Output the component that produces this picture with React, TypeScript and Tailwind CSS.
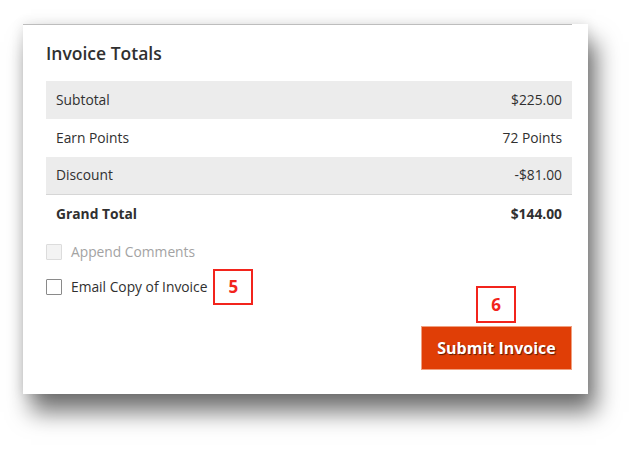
export default function App() {
  const rows = [
    { label: "Subtotal", value: "$225.00", gray: true },
    { label: "Earn Points", value: "72 Points", gray: false },
    { label: "Discount", value: "-$81.00", gray: true, border: true },
    { label: "Grand Total", value: "$144.00", gray: false, bold: true },
  ];

  return (
    <div className="w-[644px] h-[450px] bg-white overflow-hidden font-['Open_Sans',sans-serif] text-[#303030]">
      <div className="ml-[23px] mt-[24px] w-[565px] h-[370px] bg-white shadow-[8px_18px_22px_rgba(0,0,0,0.55),0_0_12px_rgba(0,0,0,0.12)] pl-[23px] pr-[16px] flex flex-col">
        {/* top rule stops short of the right edge */}
        <div className="-ml-[23px] h-px bg-[#bdbdbd]" />
        <h2 className="mt-[15px] h-[26px] leading-[26px] text-[17.5px] font-semibold text-[#303030]">
          Invoice Totals
        </h2>

        <div className="mt-[15px] flex flex-col">
          {rows.map((r) => (
            <div
              key={r.label}
              className={`h-[38px] px-[10px] flex items-center justify-between text-[13.8px] ${
                r.gray ? "bg-[#ececec]" : "bg-white"
              } ${r.border ? "border-b border-[#d6d6d6]" : ""} ${r.bold ? "font-bold" : ""}`}
            >
              <span>{r.label}</span>
              <span>{r.value}</span>
            </div>
          ))}
        </div>

        <div className="mt-[10px] flex items-center h-[18px]">
          <span className="w-[16px] h-[16px] border border-[#dcdcdc] bg-[#f3f3f3] rounded-[1px]" />
          <span className="ml-[9px] text-[13.8px] text-[#a3a3a3]">Append Comments</span>
        </div>

        <div className="mt-[8px] flex items-center h-[36px]">
          <span className="w-[16px] h-[16px] border border-[#8a8a8a] bg-white rounded-[1px]" />
          <span className="ml-[9px] text-[13.8px] text-[#303030]">Email Copy of Invoice</span>
          <span className="ml-[6px] w-[40px] h-[36px] border-2 border-[#f2241c] flex items-center justify-center text-[17px] font-bold text-[#f2241c]">
            5
          </span>
        </div>

        <div className="flex flex-col items-end">
          <div className="mr-[56px] -mt-[19px] w-[40px] h-[37px] border-2 border-[#f2241c] flex items-center justify-center text-[17px] font-bold text-[#f2241c]">
            6
          </div>
          <button className="mt-[3px] w-[151px] h-[44px] bg-[#e03e06] border border-[#f0a080] text-white text-[16px] font-bold [text-shadow:1px_1px_1px_rgba(0,0,0,0.6)]">
            Submit Invoice
          </button>
        </div>
      </div>
    </div>
  );
}
